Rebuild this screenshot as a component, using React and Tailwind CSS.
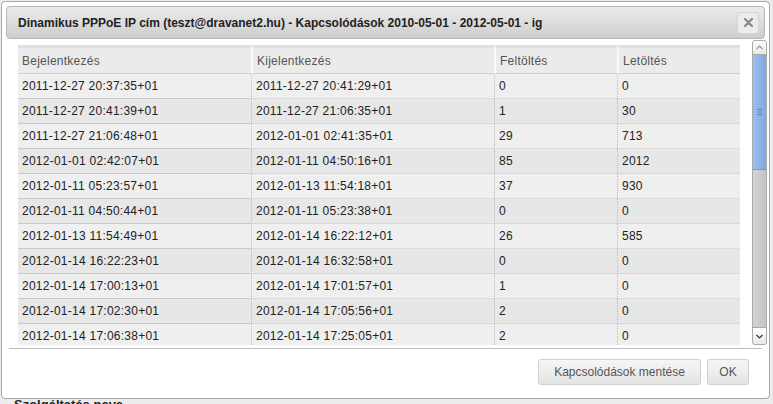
import React from 'react'

const rows = [
  ['2011-12-27 20:37:35+01', '2011-12-27 20:41:29+01', '0', '0'],
  ['2011-12-27 20:41:39+01', '2011-12-27 21:06:35+01', '1', '30'],
  ['2011-12-27 21:06:48+01', '2012-01-01 02:41:35+01', '29', '713'],
  ['2012-01-01 02:42:07+01', '2012-01-11 04:50:16+01', '85', '2012'],
  ['2012-01-11 05:23:57+01', '2012-01-13 11:54:18+01', '37', '930'],
  ['2012-01-11 04:50:44+01', '2012-01-11 05:23:38+01', '0', '0'],
  ['2012-01-13 11:54:49+01', '2012-01-14 16:22:12+01', '26', '585'],
  ['2012-01-14 16:22:23+01', '2012-01-14 16:32:58+01', '0', '0'],
  ['2012-01-14 17:00:13+01', '2012-01-14 17:01:57+01', '1', '0'],
  ['2012-01-14 17:02:30+01', '2012-01-14 17:05:56+01', '2', '0'],
  ['2012-01-14 17:06:38+01', '2012-01-14 17:25:05+01', '2', '0'],
  ['2012-01-14 17:25:40+01', '2012-01-14 18:02:11+01', '4', '12'],
]

const headers = ['Bejelentkezés', 'Kijelentkezés', 'Feltöltés', 'Letöltés']

const Scrollbar = () => (
  <div className="w-[15px] h-[305px] flex flex-col border border-[#aaa] rounded-[3px] overflow-hidden bg-[#cfcfcf]">
    <div className="h-[14px] bg-gradient-to-b from-white to-[#e8e8e8] border-b border-[#aaa] flex items-center justify-center">
      <svg width="7" height="5" viewBox="0 0 7 5">
        <path d="M0.5 4 L3.5 1 L6.5 4" fill="none" stroke="#999" strokeWidth="1.2" />
      </svg>
    </div>
    <div className="h-[115px] bg-gradient-to-r from-[#9cc0ec] to-[#7fa9e0] border-b border-[#6f98cf] flex items-center justify-center">
      <svg width="5" height="6" viewBox="0 0 5 6">
        <path d="M0 0.5 H5 M0 3 H5 M0 5.5 H5" stroke="#5d86bd" strokeWidth="1" />
      </svg>
    </div>
    <div className="flex-1 bg-gradient-to-r from-[#d4d4d4] to-[#c4c4c4]" />
    <div className="h-[17px] bg-gradient-to-b from-white to-[#e8e8e8] border-t border-[#aaa] flex items-center justify-center">
      <svg width="7" height="5" viewBox="0 0 7 5">
        <path d="M0.5 1 L3.5 4 L6.5 1" fill="none" stroke="#333" strokeWidth="1.2" />
      </svg>
    </div>
  </div>
)

const App = () => {
  return (
    <div className="relative w-[773px] h-[404px] overflow-hidden bg-[#ececec] font-['Liberation_Sans',Arial,sans-serif]">
      <div className="absolute left-[14px] top-[395px] text-[13px] font-bold text-[#222]">Szolgáltatás neve</div>

      <div className="absolute left-[1px] top-[1px] w-[769px] h-[398px] bg-white border border-[#a8a8a8] rounded-[4px] p-[4px] flex flex-col">
        <div className="h-[33px] shrink-0 rounded-[4px] border border-[#b5b5b5] bg-gradient-to-b from-[#ececec] to-[#cdcdcd] flex items-center pl-[11px] pr-[5px]">
          <span className="text-[12px] font-bold text-[#222]">
            Dinamikus PPPoE IP cím (teszt@dravanet2.hu) - Kapcsolódások 2010-05-01 - 2012-05-01 - ig
          </span>
          <div className="ml-auto w-[22px] h-[22px] rounded-[3px] bg-[#ececec] border border-[#d6d6d6] flex items-center justify-center">
            <svg width="9" height="9" viewBox="0 0 9 9">
              <path d="M1 1 L8 8 M8 1 L1 8" stroke="#888" strokeWidth="2.2" strokeLinecap="round" />
            </svg>
          </div>
        </div>

        <div className="flex mt-[1px] h-[305px] shrink-0">
          <div className="ml-[12px] mt-[5px] w-[722px] h-[300px] overflow-hidden">
            <div className="grid grid-cols-[233px_243px_123px_123px] text-[12px] tracking-[0.25px]">
              {headers.map((h, i) => (
                <div
                  key={h}
                  className={`h-[29px] flex items-center pl-[4px] bg-[#ebebeb] text-[#555] border-t-[3px] border-t-[#e0e0e0] border-b border-b-[#cfcfcf] ${i > 0 ? 'border-l-2 border-l-[#fafafa]' : ''}`}
                >
                  {h}
                </div>
              ))}
              {rows.map((r, ri) =>
                r.map((c, ci) => (
                  <div
                    key={ri + '-' + ci}
                    className={`h-[25px] flex items-center pl-[4px] text-[#222] border-b border-b-[#c8c8c8] ${ri % 2 === 0 ? 'bg-[#efefef]' : 'bg-[#e7e7e7]'} ${ci > 0 ? 'border-l border-dotted border-l-[#bbb]' : ''}`}
                  >
                    {c}
                  </div>
                ))
              )}
            </div>
          </div>
          <div className="ml-auto mr-[-2px]">
            <Scrollbar />
          </div>
        </div>

        <div className="mx-[3px] mt-[3px] border-t border-[#bdbdbd]" />

        <div className="flex justify-end gap-[6px] pr-[16px] pt-[10px]">
          <button className="h-[26px] w-[163px] rounded-[3px] border border-[#d0d0d0] bg-gradient-to-b from-[#f6f6f6] to-[#e4e4e4] text-[12px] text-[#555]">
            Kapcsolódások mentése
          </button>
          <button className="h-[26px] w-[42px] rounded-[3px] border border-[#d0d0d0] bg-gradient-to-b from-[#f6f6f6] to-[#e4e4e4] text-[12px] text-[#555]">
            OK
          </button>
        </div>
      </div>
    </div>
  )
}

export default App
